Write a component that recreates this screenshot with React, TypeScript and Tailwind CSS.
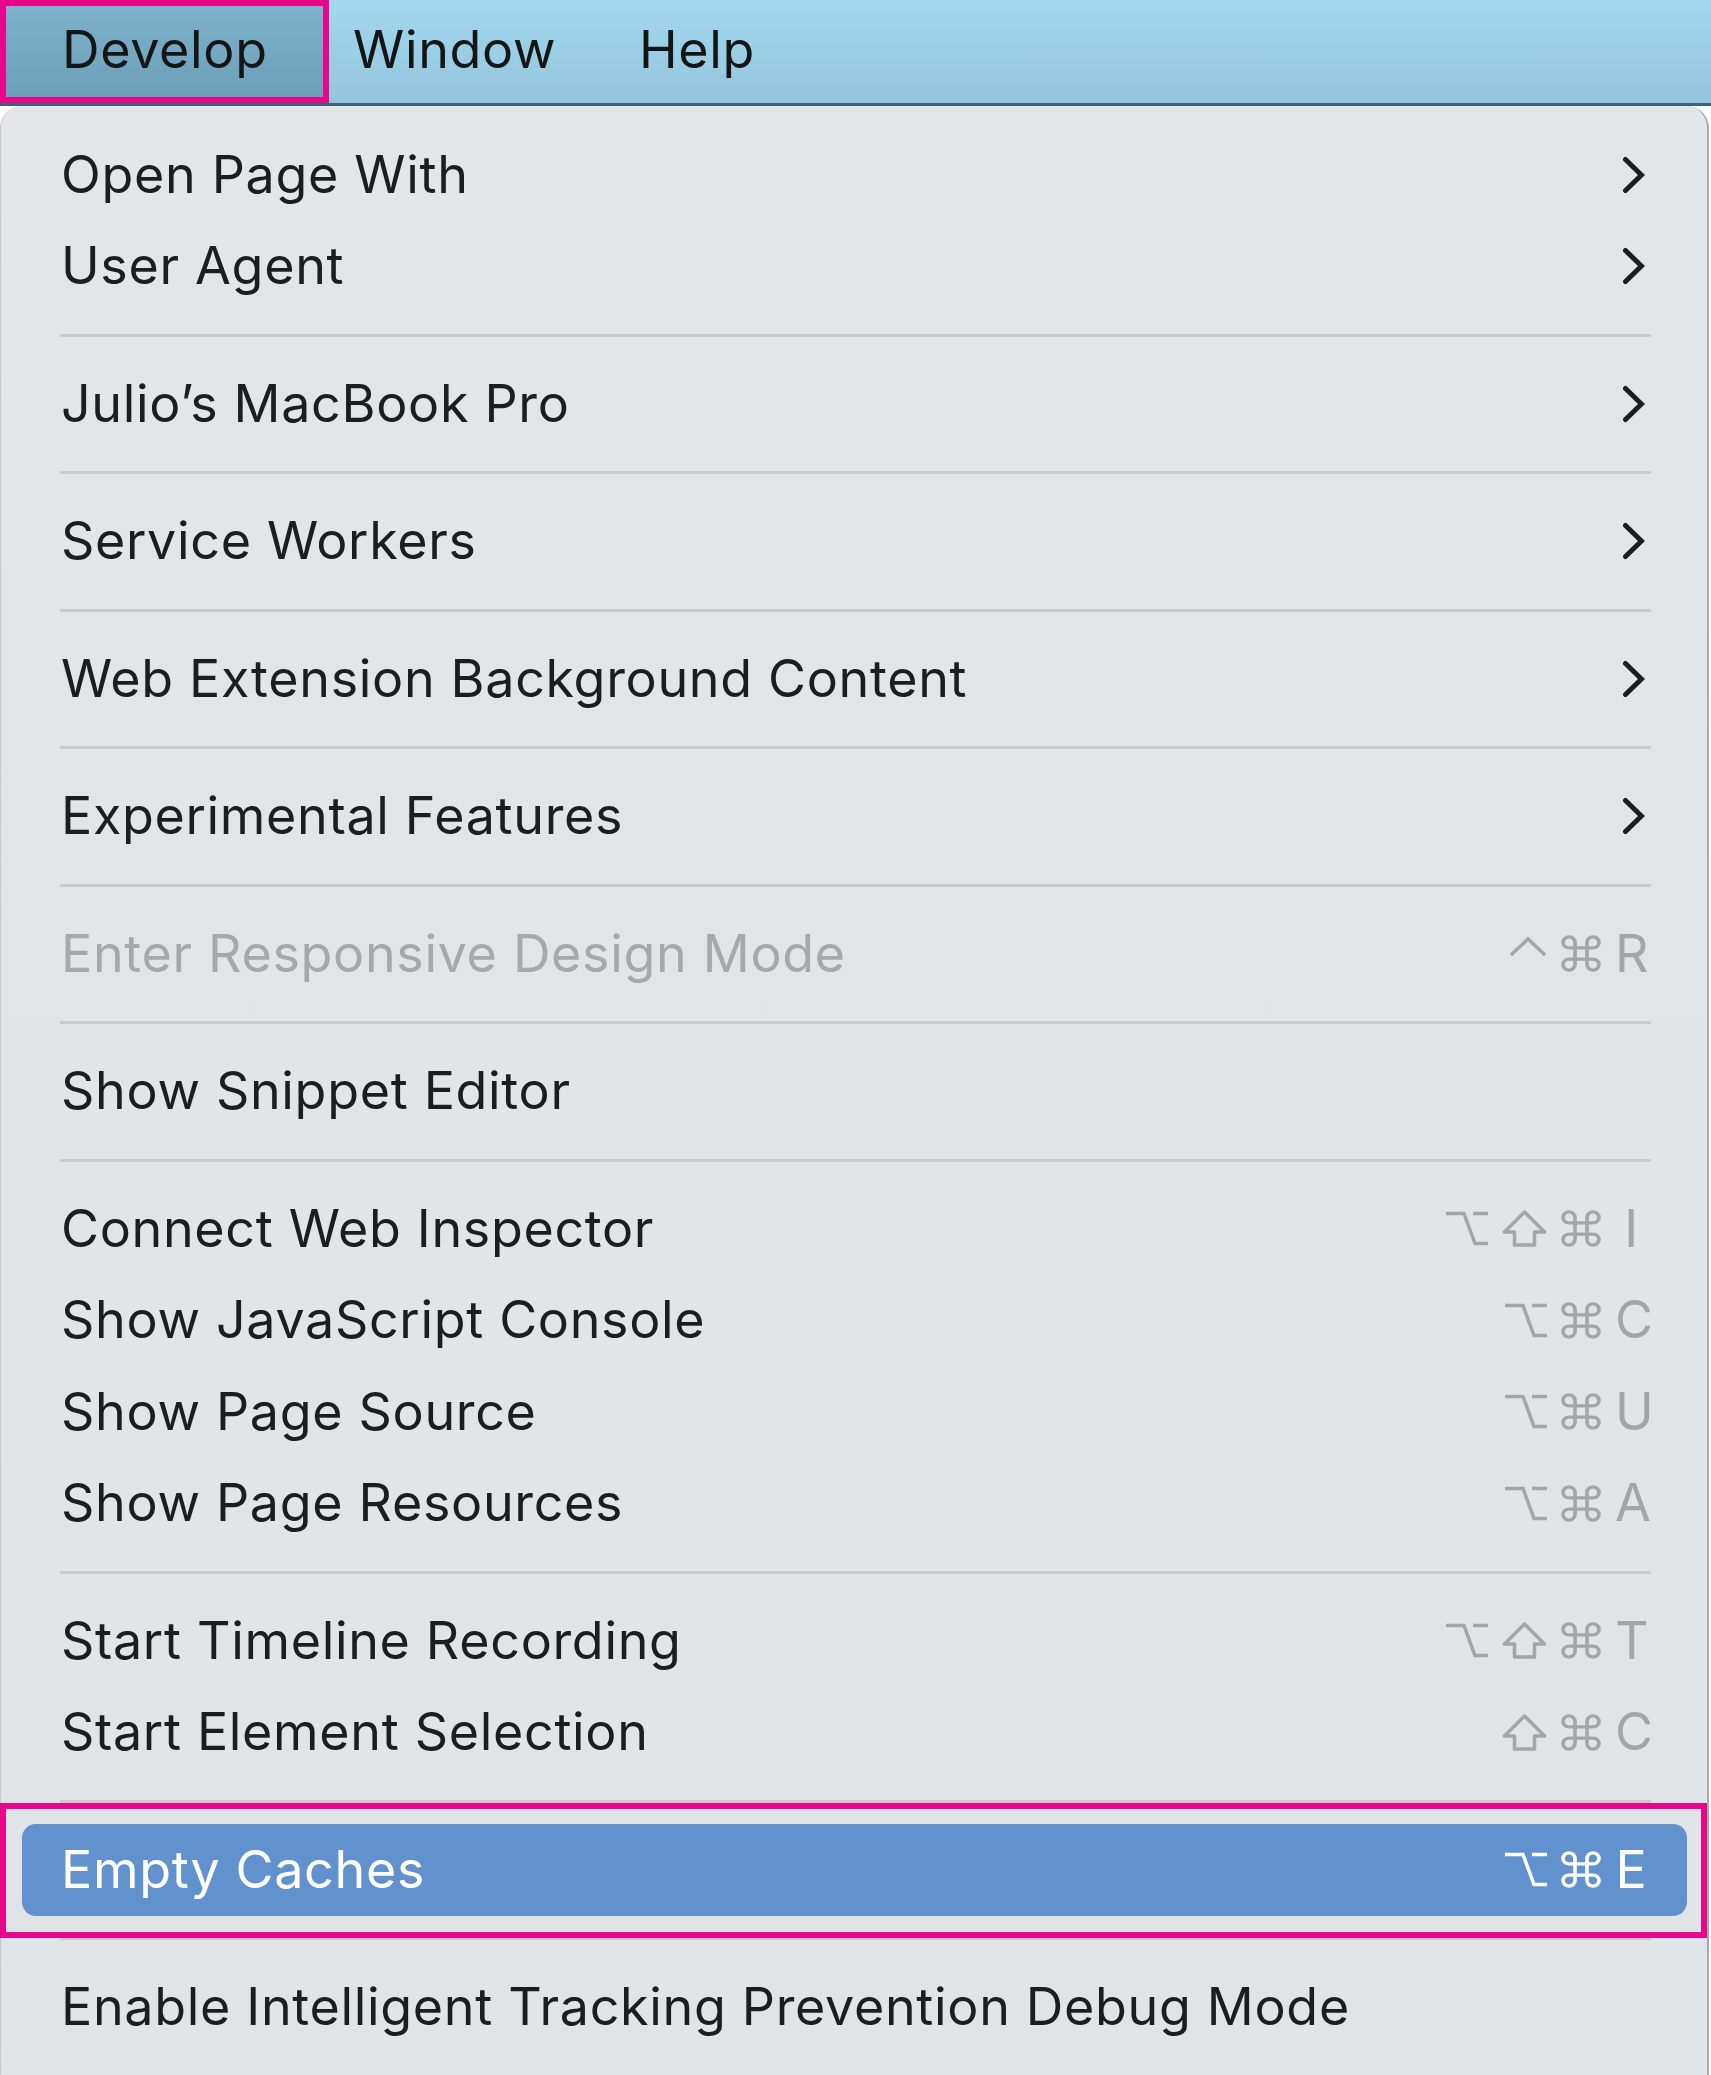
import type { ReactNode } from 'react';

type Mod = 'ctrl' | 'opt' | 'shift' | 'cmd';

type Entry =
  | { kind: 'sep' }
  | {
      kind: 'item';
      label: string;
      submenu?: boolean;
      disabled?: boolean;
      active?: boolean;
      mods?: Mod[];
      keyChar?: string;
    };

const sep: Entry = { kind: 'sep' };

const entries: Entry[] = [
  { kind: 'item', label: 'Open Page With', submenu: true },
  { kind: 'item', label: 'User Agent', submenu: true },
  sep,
  { kind: 'item', label: 'Julio’s MacBook Pro', submenu: true },
  sep,
  { kind: 'item', label: 'Service Workers', submenu: true },
  sep,
  { kind: 'item', label: 'Web Extension Background Content', submenu: true },
  sep,
  { kind: 'item', label: 'Experimental Features', submenu: true },
  sep,
  { kind: 'item', label: 'Enter Responsive Design Mode', disabled: true, mods: ['ctrl', 'cmd'], keyChar: 'R' },
  sep,
  { kind: 'item', label: 'Show Snippet Editor' },
  sep,
  { kind: 'item', label: 'Connect Web Inspector', mods: ['opt', 'shift', 'cmd'], keyChar: 'I' },
  { kind: 'item', label: 'Show JavaScript Console', mods: ['opt', 'cmd'], keyChar: 'C' },
  { kind: 'item', label: 'Show Page Source', mods: ['opt', 'cmd'], keyChar: 'U' },
  { kind: 'item', label: 'Show Page Resources', mods: ['opt', 'cmd'], keyChar: 'A' },
  sep,
  { kind: 'item', label: 'Start Timeline Recording', mods: ['opt', 'shift', 'cmd'], keyChar: 'T' },
  { kind: 'item', label: 'Start Element Selection', mods: ['shift', 'cmd'], keyChar: 'C' },
  sep,
  { kind: 'item', label: 'Empty Caches', active: true, mods: ['opt', 'cmd'], keyChar: 'E' },
  sep,
  { kind: 'item', label: 'Enable Intelligent Tracking Prevention Debug Mode' },
  sep,
];

// modifier key glyphs
function ModGlyph({ mod }: { mod: Mod }) {
  if (mod === 'ctrl') {
    return (
      <svg width="38" height="37" viewBox="0 0 38 37" fill="none" stroke="currentColor" strokeWidth="3.5">
        <path d="M2 20L19 4L36 20" />
      </svg>
    );
  }
  if (mod === 'opt') {
    return (
      <svg width="42" height="37" viewBox="0 0 42 37" fill="none" stroke="currentColor" strokeWidth="3.5">
        <path d="M0 3.5H18L29 33.5H42M27 3.5H42" />
      </svg>
    );
  }
  if (mod === 'shift') {
    return (
      <svg width="45" height="37" viewBox="0 0 45 37" fill="none" stroke="currentColor" strokeWidth="3.5" strokeLinejoin="round">
        <path d="M22.5 2L2.5 22H12.5V35H32.5V22H42.5Z" />
      </svg>
    );
  }
  return (
    <svg width="40" height="37" viewBox="0 0 40 40" preserveAspectRatio="none" fill="none" stroke="currentColor" strokeWidth="3.6">
      <path d="M14 8A6 6 0 1 0 8 14M32 14A6 6 0 1 0 26 8M26 32A6 6 0 1 0 32 26M8 26A6 6 0 1 0 14 32M14 8V32M26 8V32M8 14H32M8 26H32" />
    </svg>
  );
}

function Chevron() {
  return (
    <svg width="23" height="38" viewBox="0 0 23 38" fill="none" stroke="currentColor" strokeWidth="5" strokeLinecap="round" strokeLinejoin="miter">
      <path d="M3.5 3.5L19.5 19L3.5 34.5" />
    </svg>
  );
}

function Shortcut({ mods, keyChar }: { mods: Mod[]; keyChar: string }) {
  return (
    <div className="flex items-center gap-[14px]">
      {mods.map((m) => (
        <ModGlyph key={m} mod={m} />
      ))}
      <span className="w-[33px] text-center">{keyChar}</span>
    </div>
  );
}

function Row({ entry }: { entry: Extract<Entry, { kind: 'item' }> }) {
  let tone = 'text-[#1c1d1e]';
  if (entry.disabled) tone = 'text-[#a6a8aa]';
  if (entry.active) tone = 'text-white';
  const shortcutTone = entry.active ? 'text-white' : 'text-[#a3a5a8]';

  let right: ReactNode = null;
  if (entry.submenu) {
    right = (
      <span className="mr-[3px] text-[#1c1d1e]">
        <Chevron />
      </span>
    );
  } else if (entry.mods && entry.keyChar) {
    right = (
      <span className={shortcutTone}>
        <Shortcut mods={entry.mods} keyChar={entry.keyChar} />
      </span>
    );
  }

  return (
    <div className="relative h-[91.5px] pl-[21px] pr-[20px]">
      <div
        className={`flex h-full items-center justify-between rounded-[14px] px-[39px] ${
          entry.active ? 'bg-[#6292cd]' : ''
        } ${tone}`}
      >
        <span className="whitespace-nowrap">{entry.label}</span>
        {right}
      </div>
      {entry.active && (
        <div className="pointer-events-none absolute -left-px right-0 -top-[21px] -bottom-[22px] border-[6px] border-[#e8078a]" />
      )}
    </div>
  );
}

export default function App() {
  return (
    <div
      className="h-[2075px] overflow-hidden bg-white text-[52px] tracking-[0.013em]"
      style={{ fontFamily: 'Inter, "Noto Sans", "Liberation Sans", sans-serif' }}
    >
      {/* Menu bar */}
      <div className="flex h-[106px] items-stretch border-b-[3px] border-[#3d6376] bg-gradient-to-b from-[#a3d7ed] to-[#93c6dc] text-[#141516]">
        <div className="flex w-[329px] items-center border-[6px] border-[#e8078a] bg-gradient-to-b from-[#7db2ca] to-[#6a9fb7] pb-[4px] pl-[56px]">
          Develop
        </div>
        <div className="flex w-[310px] items-center pb-[4px] pl-[24px]">Window</div>
        <div className="flex items-center pb-[4px]">Help</div>
      </div>

      {/* Dropdown panel */}
      <div className="w-[1709px] rounded-t-[22px] border-l border-r-2 border-l-[#c7c9cb] border-r-[#a7a9ab] bg-gradient-to-b from-[#e3e6e8] to-[#e1e4e6] pt-[23px] pb-[40px]">
        {entries.map((e, i) =>
          e.kind === 'sep' ? (
            <div key={i} className="flex h-[46px] items-center pl-[59px] pr-[56px]">
              <div className="h-[3px] w-full bg-[#c9cbcd]" />
            </div>
          ) : (
            <Row key={i} entry={e} />
          )
        )}
      </div>
    </div>
  );
}
